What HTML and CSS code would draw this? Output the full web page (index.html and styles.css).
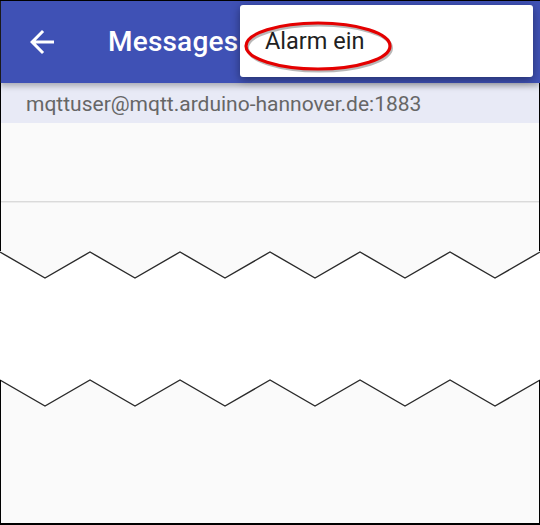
FILE: index.html
```html
<!DOCTYPE html>
<html lang="de">
<head>
<meta charset="utf-8">
<title>Messages</title>
<link rel="stylesheet" href="styles.css">
</head>
<body>
<div class="screen">
  <header class="appbar">
    <svg class="back" viewBox="0 0 24 24" width="36" height="36" aria-hidden="true">
      <path fill="#fff" d="M20 11H7.83l5.59-5.59L12 4l-8 8 8 8 1.41-1.41L7.83 13H20v-2z"/>
    </svg>
    <h1 class="title">Messages</h1>
  </header>
  <div class="subtitle">mqttuser@mqtt.arduino-hannover.de:1883</div>
  <div class="paper-top">
    <div class="paper-body">
      <div class="divider"></div>
    </div>
    <svg class="zig" viewBox="0 0 540 28" width="540" height="28" aria-hidden="true">
      <polygon fill="#fafafa" points="0,0 0,1 45,27 90,1 135,27 180,1 225,27 270,1 315,27 360,1 405,27 450,1 495,27 540,1 540,0"/>
      <polyline fill="none" stroke="#2a2a2a" stroke-width="1.4" points="0,1 45,27 90,1 135,27 180,1 225,27 270,1 315,27 360,1 405,27 450,1 495,27 540,1"/>
    </svg>
  </div>
  <div class="gap"></div>
  <div class="paper-bottom">
    <svg class="zig" viewBox="0 0 540 28" width="540" height="28" aria-hidden="true">
      <polygon fill="#fafafa" points="0,1 45,27 90,1 135,27 180,1 225,27 270,1 315,27 360,1 405,27 450,1 495,27 540,1 540,28 0,28"/>
      <polyline fill="none" stroke="#2a2a2a" stroke-width="1.4" points="0,1 45,27 90,1 135,27 180,1 225,27 270,1 315,27 360,1 405,27 450,1 495,27 540,1"/>
      <line x1="0.5" y1="1" x2="0.5" y2="28" stroke="#000" stroke-width="1"/>
      <line x1="539.5" y1="1" x2="539.5" y2="28" stroke="#000" stroke-width="1"/>
    </svg>
    <div class="paper-body bottom-body"></div>
  </div>
  <div class="menu">
    <span class="menu-item">Alarm ein</span>
    <svg class="circle" viewBox="0 0 160 60" width="160" height="60" aria-hidden="true">
      <ellipse cx="80" cy="29" rx="72" ry="23" fill="none" stroke="rgba(0,0,0,0.28)" stroke-width="3" transform="translate(1.5,2)"/>
      <ellipse cx="80" cy="29" rx="72" ry="23" fill="none" stroke="#e40000" stroke-width="3.2"/>
    </svg>
  </div>
</div>
</body>
</html>
```

FILE: styles.css
```css
* { box-sizing: border-box; }
html, body { margin: 0; padding: 0; background: #fff; }
body { font-family: Roboto, "Noto Sans", "Liberation Sans", sans-serif; }

.screen {
  position: relative;
  width: 540px;
  height: 525px;
  border-top: 1px solid #000;
  display: flex;
  flex-direction: column;
  overflow: hidden;
}

.appbar {
  position: relative;
  z-index: 2;
  height: 82px;
  flex: none;
  background: #3f51b5;
  border-left: 1px solid #1a1a1a;
  display: flex;
  align-items: center;
  padding-left: 23px;
  box-shadow: 0 3px 6px rgba(0, 0, 0, 0.28);
}

.back { display: block; flex: none; }

.title {
  margin: 0 0 0 48px;
  color: #fff;
  font-size: 28px;
  font-weight: 500;
  line-height: 1;
  letter-spacing: 0.2px;
}

.subtitle {
  height: 40px;
  flex: none;
  background: #e8eaf6;
  color: #666;
  font-size: 21px;
  line-height: 40px;
  padding-left: 25px;
  padding-top: 1px;
  border-left: 1px solid #000;
  border-right: 1px solid #000;
}

.paper-top { flex: none; display: flex; flex-direction: column; }
.paper-body {
  background: #fafafa;
  border-left: 1px solid #000;
  border-right: 1px solid #000;
}
.paper-top .paper-body { height: 128px; padding-top: 78px; }
.divider { height: 1px; background: #dadada; box-shadow: 0 1px 0 #ececec; }

.zig { display: block; flex: none; }

.gap { height: 100px; flex: none; background: #fff; }

.paper-bottom { flex: 1; display: flex; flex-direction: column; }
.bottom-body { flex: 1; border-bottom: 2px solid #000; }

.menu {
  position: absolute;
  z-index: 5;
  left: 240px;
  top: 4px;
  width: 293px;
  height: 72px;
  background: #fff;
  border-radius: 3px;
  box-shadow: 0 3px 10px rgba(0, 0, 0, 0.4);
  display: flex;
  align-items: center;
  padding-left: 25px;
}

.menu-item {
  color: #212121;
  font-size: 23.5px;
  line-height: 1;
  padding-top: 2px;
}

.circle {
  position: absolute;
  left: -2px;
  top: 12px;
}
```
